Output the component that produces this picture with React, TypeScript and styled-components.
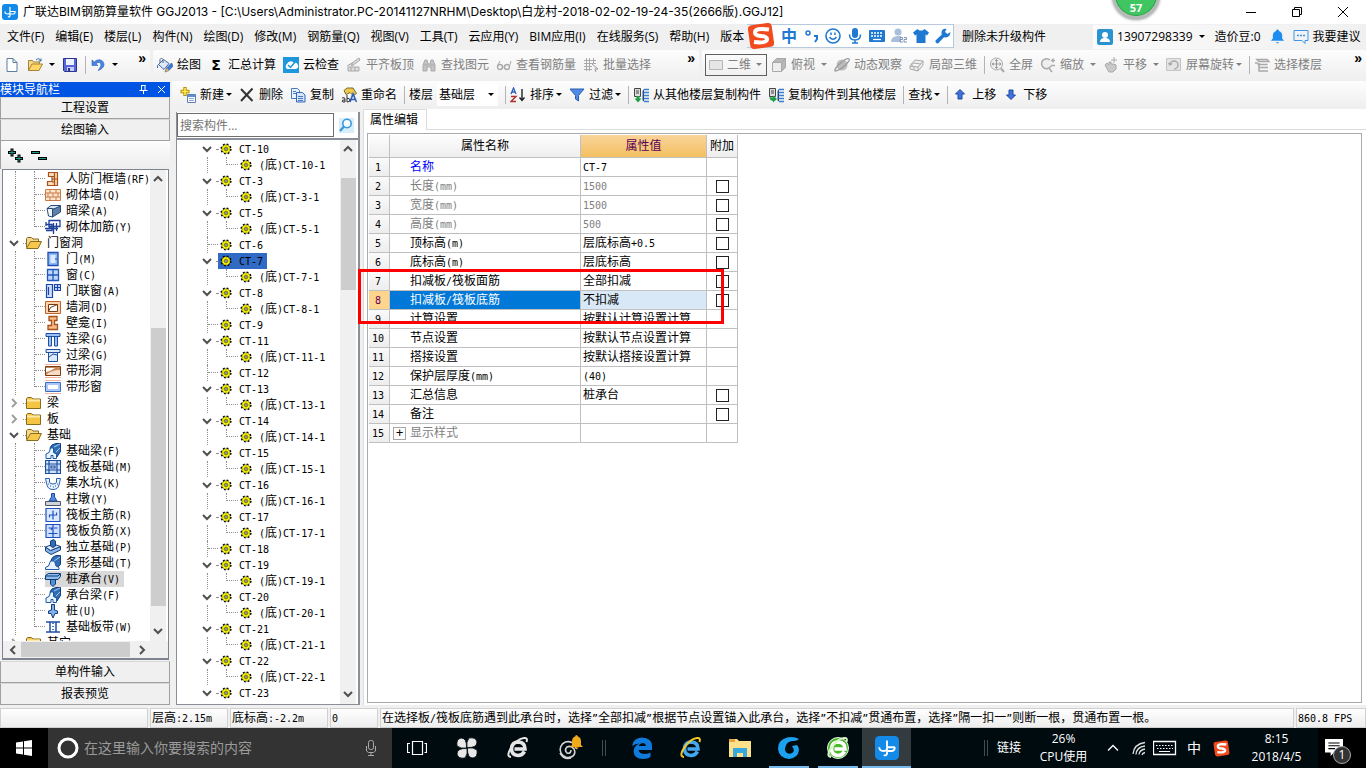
import React from 'react';
import styled, { createGlobalStyle, css } from 'styled-components';

const UI = `'Open Sans', 'Noto Sans CJK SC', sans-serif`;
const SONG = `'Liberation Sans', 'Noto Sans CJK SC', sans-serif`;

const Global = createGlobalStyle`
  * { box-sizing: border-box; }
  html, body { margin: 0; padding: 0; }
  body { font: 12px/16px ${UI}; color: #000; background: #f0f0f0; overflow: hidden; }
  button, input { font: inherit; color: inherit; margin: 0; }
  button { padding: 0; border: 0; background: none; text-align: left; white-space: nowrap; }
  a { color: inherit; text-decoration: none; }
  svg { display: block; flex: none; }
  ul { list-style: none; margin: 0; padding: 0; }
`;

/* ---------- text set with half-width Latin glyphs ---------- */
const Latin = styled.span`
  font-family: 'DejaVu Sans Mono', monospace;
  font-size: 10px;
`;
const Song = ({ children }: { children: string }) => (
  <>
    {children.split(/([\x20-\x7e”]+)/).map((part, i) =>
      i % 2 ? <Latin key={i}>{part}</Latin> : part,
    )}
  </>
);

/* ---------- icons ---------- */
const Svg = ({ size = 16, box = 16, children }: { size?: number; box?: number; children: React.ReactNode }) => (
  <svg width={size} height={size} viewBox={`0 0 ${box} ${box}`} fill="none" aria-hidden="true">
    {children}
  </svg>
);

const G = '#a9a9a9';
const L = '#dcdcdc';
const icons: Record<string, React.ReactNode> = {
  page: <path d="M3 1.5h6l4 4v9H3z M9 1.5v4h4" fill="#fff" stroke="#5d7da3" />,
  open: (
    <>
      <path d="M1.5 13.500V3.500h4l1 1.500h6v2" fill="#f5d98b" stroke="#a8822f" />
      <path d="M1.500 13.500 5 7h10.500L12 13.500z" fill="#ffd766" stroke="#a8822f" />
      <path d="M9 3q3-3 5 1m0 0V1.500M14 4h-2.500" stroke="#3a6ea5" />
    </>
  ),
  save: (
    <>
      <path d="M1.500 1.500h13v13h-12l-1-1z" fill="#5a67d8" stroke="#2c338c" />
      <path d="M4 2h8v6H4z" fill="#eef1ff" />
      <path d="M5 10h7v4H5z" fill="#c8cdf5" />
      <path d="M6 11h2v3H6z" fill="#2c338c" />
    </>
  ),
  undo: (
    <path d="M2 3v5.500h6L6 6.700C9 4 12 6 10.500 9.500 10 11 9 12 8 13.500c5-1.500 7-5 5.500-8C12 2 7 2 4.300 5z" fill="#4a86e0" stroke="#2a5cb8" strokeWidth=".6" />
  ),
  paint: (
    <>
      <path d="m1.500 7.500 5-5 5.500 4-5 6z" fill="#dfe8f7" stroke="#44669c" />
      <path d="M3 6V2.500q1.500-3 3 0V6M2 7q-2 1-1.500 4" stroke="#44669c" />
      <path d="m14.500 6-5 5-1.500 4 4-1.500L16 9z" fill="#3f7ad6" stroke="#1f4c9c" strokeWidth=".6" />
      <path d="m10 11-2 4 4-1.500z" fill="#f0b24a" />
    </>
  ),
  cloud: (
    <>
      <path d="M0 0h16v16H0z" fill="#1f97dc" />
      <path d="M4 12a3 3 0 0 1 0-5 4 4 0 0 1 7-1 3 3 0 0 1 2 6z" fill="#fff" />
      <path d="m5 8 2.500 2.500L12 5" stroke="#1f97dc" strokeWidth="1.500" />
    </>
  ),
  align: <path d="m1 9 5-3v3l8-6-1-2-7 5v3M2 10v4h11v-4zM5 10v4M9 10v4" fill={L} stroke={G} />,
  binoc: <path d="M2 14V8l2-5h2l1 4h2l1-4h2l2 5v6h-4v-4H6v4zM3 8h4M9 8h4" fill="#c4c4c4" stroke={G} />,
  glasses: (
    <>
      <circle cx="4" cy="10" r="2.500" stroke={G} strokeWidth="1.400" />
      <circle cx="11" cy="10" r="2.500" stroke={G} strokeWidth="1.400" />
      <path d="M6.500 10h2M1.500 9 4 4M13.500 9 15 4" stroke={G} />
    </>
  ),
  batch: (
    <>
      <path d="M1 3.500h12M1 6.500h12M1 9.500h8M1 12.500h8M3.500 1v13M6.500 1v13M10.500 1v6" stroke={G} />
      <path d="m9 7 6 5h-3l1 3" fill="#eee" stroke="#999" />
    </>
  ),
  rect2d: <path d="M1.500 3.500h13v9h-13z" fill="#e6e6e6" stroke="#b5b5b5" />,
  cube: (
    <>
      <path d="m1.500 5.500 4-4h9v9l-4 4" fill="#b8b8b8" stroke={G} />
      <path d="M1.500 5.500h9v9h-9z" fill="#eee" stroke={G} />
      <path d="m10.500 5.500 4-4" stroke={G} />
    </>
  ),
  orbit: (
    <>
      <circle cx="8" cy="8" r="5.500" fill="#bcbcbc" />
      <path d="M1 14C-1 12 12 0 15 2c2 2-9 12-14 12" stroke="#9c9c9c" strokeWidth="1.300" />
    </>
  ),
  local3d: <path d="m1 9 5-6 8 1v4l-5 6-8-2zM1 9l8 1 5-6M9 10v4M4 6l8 1M5 9v4M3 6v4" fill="#eee" stroke={G} />,
  full: (
    <>
      <circle cx="7.500" cy="7" r="6" stroke={G} fill="#f1f1f1" />
      <path d="M7.500 2.500v9M3 7h9M6 4l1.500-1.500L9 4M6 10l1.500 1.500L9 10M4.500 5.500 3 7l1.500 1.500M10.500 5.500 12 7l-1.500 1.500" stroke="#999" />
      <path d="m12 11.500 3 3.500" stroke={G} strokeWidth="2" />
    </>
  ),
  zoom: (
    <>
      <path d="M10 3a5 5 0 1 0 1 6" fill="#eee" stroke={G} strokeWidth="1.500" />
      <path d="m9 11 3 4M11 3.500h4M13 1.500v4M11 8.500h4" stroke={G} strokeWidth="1.500" />
    </>
  ),
  pan: <path d="M2 8l2-2 2 2V5h2v2h2l3 1v4l-3 3H6zM11 0v6M8 3h6" fill="#c9c9c9" stroke={G} />,
  rotate: (
    <>
      <path d="M.500 1.500h14v12H.500z" fill="#e4e4e4" stroke="#c4c4c4" />
      <path d="M4 8a4 4 0 1 1 4 4M4 8 2.500 6M4 8l2-1.500" stroke={G} strokeWidth="1.500" />
    </>
  ),
  floors: <path d="M3 2.500h10l2 2H5zM1 6h3M3.500 7.500h10M5 6v8h9M5 10.500h9" stroke={G} strokeWidth="1.500" />,
  create: (
    <>
      <path d="M5 0v9M.500 4.500h9" stroke="#b89300" strokeWidth="3.400" />
      <path d="M5 1v7M1.500 4.500h7" stroke="#ffe85c" strokeWidth="1.600" />
      <path d="M7.500 7.500h8v8h-8z" fill="#fff" stroke="#5b7fb5" />
      <path d="M8 8h7v2H8z" fill="#5b8fd8" />
      <path d="M9 11.500h5M9 13.500h5" stroke="#8aa8d0" />
    </>
  ),
  del: <path d="m2 2 11.500 12M13.500 1.500 2 14" stroke="#333" strokeWidth="2" />,
  copy: (
    <>
      <path d="M1.500 1.500h6l2 2v8h-8z" fill="#e8f0fd" stroke="#4a78c0" />
      <path d="M6.500 5.500h6l2.500 2.500v7H6.500z" fill="#d5e4fb" stroke="#3567b8" />
      <path d="M3 4.500h3M3 6.500h3M8 9.500h5M8 11.500h5M8 13.500h5" stroke="#4a78c0" />
    </>
  ),
  rename: (
    <>
      <path d="M3 3.500 6 1h6l3.500 5.500-3.500 2-3-3-4 2z" fill="#ecc94b" stroke="#7a6a2a" />
      <path d="m9 15 3-8 3.500 8M10.500 12.500h4" stroke="#2b5fb8" strokeWidth="1.600" />
      <path d="M1 11q3-1 3 1v3q-3 .5-3-1 0-1.200 3-1M6 8v7q3 0 3-2t-3-1.500" stroke="#333" />
    </>
  ),
  sort: (
    <>
      <path d="m1 7 2.500-6L6 7M2 5h3" stroke="#2c5fb5" strokeWidth="1.300" />
      <path d="M1 9.500h5l-5 5h5" stroke="#b03030" strokeWidth="1.400" />
      <path d="M12 2v11M9.500 10.500 12 13.500l2.500-3" stroke="#222" strokeWidth="1.400" />
    </>
  ),
  filter: <path d="M1 2h14L9.500 8.500V14l-3-2V8.500z" fill="#4f8be8" stroke="#2a5cb0" />,
  fromFloor: (
    <>
      <path d="M1.500 1.500h6v8h-6z" fill="#ddd" stroke="#444" />
      <path d="M3 4h3M3 6h3" stroke="#444" />
      <path d="m1.500 11.500 3.500 4 3.500-4h-2V9h-3v2.500z" fill="#1f9d45" />
      <path d="M9.500 4 11 2v12.500l-1.500-1z" fill="#244f8a" />
      <path d="M11 2.500h5M11 5.500h5M11 8.500h5M11 11.500h5M11 14.500h5" stroke="#3b7fd0" strokeWidth="1.500" />
    </>
  ),
  toFloor: (
    <>
      <path d="M1.500 1.500h6v8h-6z" fill="#ddd" stroke="#444" />
      <path d="M3 4h3M3 6h3" stroke="#444" />
      <path d="m9 12-4-3.500v2q-3 0-3.500-1 0 4 3.500 4.500v1.500z" fill="#1f9d45" />
      <path d="M9.500 4 11 2v12.500l-1.500-1z" fill="#244f8a" />
      <path d="M11 2.500h5M11 5.500h5M11 8.500h5M11 11.500h5M11 14.500h5" stroke="#3b7fd0" strokeWidth="1.500" />
    </>
  ),
  up: <path d="M8 2.500 12.500 7H10v5H6V7H3.500z" fill="#3f74dc" stroke="#1d46a0" />,
  down: <path d="M8 12.500 3.500 8H6V3h4v5h2.500z" fill="#3f74dc" stroke="#1d46a0" />,
  search: (
    <>
      <path d="M1 1h15v15H1z" fill="#d8edfc" />
      <circle cx="9" cy="6.500" r="4.200" stroke="#3a97dc" strokeWidth="1.600" fill="#f6fbff" />
      <path d="m6 9.500-4 4.500" stroke="#3a97dc" strokeWidth="2.400" />
    </>
  ),
  gear: (
    <>
      <circle cx="8" cy="8" r="4.700" stroke="#000" strokeWidth="1.800" strokeDasharray="1.850 1.840" />
      <circle cx="8" cy="8" r="4.200" fill="#ff0" stroke="#000" strokeWidth=".4" />
      <path d="M8 4.500v7M4.500 8h7M5.700 5.700l4.600 4.600M10.300 5.700l-4.600 4.600" stroke="#6b6600" strokeWidth=".5" />
      <circle cx="8" cy="8" r="1.300" fill="#fff" stroke="#222" strokeWidth=".8" />
    </>
  ),
  folder: (
    <>
      <path d="M.500 13.500v-10l1-1h4l1.500 1.500h7.500v9.500z" fill="#f4c542" stroke="#8a6a1c" />
      <path d="M1 5.500h13" stroke="#ffe9a6" strokeWidth="2" />
    </>
  ),
  folderOpen: (
    <>
      <path d="M.500 12.500v-9l1-1h4l1.500 1.500h5.500v3" fill="#f3d98d" stroke="#8a6a1c" />
      <path d="m.500 13.500 4-7h11l-3.500 7z" fill="#f6c94c" stroke="#8a6a1c" />
    </>
  ),
  frameWall: <path d="M3.500 1.500h9v13h-10v-4H7v-5H3.500zM9.500 2v12M7 8h5.500M7 5.500h3M7 11h3" fill="#fbd9b8" stroke="#a4501a" strokeWidth="1.200" />,
  brick: <path d="M.500 2.500h15v11H.500zM.500 6h15M.500 10h15M5 2.500V6M11 2.500V6M8 6v4M3 6v4M13 6v4M5 10v3.500M11 10v3.500" fill="#fde6d0" stroke="#c97a45" />,
  beam: (
    <>
      <path d="m2 5.500 4-3h9.500L11 6.500z" fill="#dbe8f7" stroke="#274a74" />
      <path d="M7.500 6.500 15.500 3v6l-8 5z" fill="#5f7fa6" stroke="#274a74" />
      <path d="M2 5.500h5.500V14l-4-1z" fill="#eef4fb" stroke="#274a74" />
    </>
  ),
  rebarWall: <path d="M4 1.500h11v6H4zM0 9.500h13M1 5.500h6v6H1M8.500 4v11M11.500 4v8M4 8l3 2M1 3v4" stroke="#1d3f9a" strokeWidth="1.300" />,
  door: (
    <>
      <path d="M3 1.500h10v13H3z" fill="#8cb8f5" stroke="#1d4db0" strokeWidth="1.300" />
      <path d="M5.500 4h5v8h-5z" fill="#dcebff" />
      <path d="M10 8h2" stroke="#1d4db0" />
    </>
  ),
  window: <path d="M2.500 2.500h11v11h-11zM8 2.500v11M2.500 8h11" fill="#bcd8ff" stroke="#2456bc" strokeWidth="1.300" />,
  doorWin: <path d="M1.500 1.500h6v13h-6zM9.500 1.500h6v6h-6zM12.500 1.500v6M9.500 4.500h6M3.500 4v8" fill="#cfe0ff" stroke="#1d44a8" strokeWidth="1.200" />,
  hole: (
    <>
      <path d="M.500 2.500h15v12H.500z" fill="#fbd3ae" stroke="#c1622a" />
      <path d="M3.500 5.500h9v7h-9z" fill="#fff" stroke="#7a3b14" />
      <path d="m3.500 12.500 2-4 7-3" stroke="#7a3b14" />
    </>
  ),
  niche: <path d="M4 1.500h8v4H9.500v4h3v5H3v-4h3.500v-5H4z" fill="#f5b98a" stroke="#a4501a" strokeWidth="1.300" />,
  linkBeam: <path d="M1 2.500h14v3H1zM3.500 5.500h3V15h-3zM9.500 5.500h3V15h-3z" fill="#9cc0f5" stroke="#1c4d9e" />,
  lintel: <path d="M1 2.500h14v3H1zM3.500 5.500h9v9h-9zM4 10l4-3 4 1" fill="#dce9fb" stroke="#1c4d9e" />,
  stripHole: (
    <>
      <path d="M0 1.500h16M0 14.500h16" stroke="#f4b0a0" />
      <path d="M.500 3.500h15v9H.500z" fill="#c98a5a" stroke="#7a3b14" />
      <path d="M1 9q5-1 9-4H1z" fill="#fff" />
      <path d="M1 12q5-5 14-5v5z" fill="#f6dcc6" />
    </>
  ),
  stripWin: (
    <>
      <path d="M0 1.500h16M0 14.500h16" stroke="#f4b0a0" />
      <path d="M.500 3.500h15v9H.500z" fill="#a9c8f7" stroke="#3a6cc4" />
      <path d="M3 6h10v4H3z" fill="#fff" />
    </>
  ),
  found: (
    <>
      <path d="M5 5q1-4 6-4.500h4.500v8L12 14H9z" fill="#2f6db5" stroke="#123f7c" />
      <path d="m9 4 6-3M11 9l4-4" stroke="#a9cdf2" />
      <path d="M1 15.500V11l3-1.500L5.500 5h3v4.500l3 1.500v4.500H8v-3H6v3z" fill="#eaf3fd" stroke="#1c5aa5" />
    </>
  ),
  raft: <path d="M.500 1.500h15v13H.500zM4 1.500v13M12 1.500v13M.500 5h15M.500 11h15M6 7h4v2H6z" fill="#cfe2fb" stroke="#1c4d9e" strokeWidth="1.200" />,
  pit: (
    <>
      <path d="M.500 3.500h4V7q0 2 3.500 2t3.500-2V3.500h4L14 10q-1 4.500-6 4.500T2 10z" fill="#e8f1fd" stroke="#2b62b0" />
      <path d="M3 9h1M5 11h1M8 12h1M10 11h1M12 9h1" stroke="#2b62b0" />
    </>
  ),
  pier: (
    <>
      <path d="M.500 10.500h15v4H.500z" fill="#d0d4da" stroke="#4c5563" />
      <path d="M6.500 2.500h3V6l2.500 4H4l2.500-4z" fill="#4f8be0" stroke="#1c4d9e" />
    </>
  ),
  rebarMain: <path d="M1 1.500h14v13H1zM8 3.500v9M4.500 10.500V8h7V5.500" fill="#dbe9ff" stroke="#1d4fc0" strokeWidth="1.200" />,
  rebarNeg: <path d="M1 1.500h14v13H1zM8 1.500v13M3.500 5h3.500l-1 2M9 5h3.500M3.500 10.500h9" fill="#cfe0ff" stroke="#1d4fc0" strokeWidth="1.200" />,
  isolated: (
    <>
      <path d="m.500 8 5 3.500 10-4v3.500L6 15.500.500 12z" fill="#8ab4e8" stroke="#123f7c" />
      <path d="m.500 8 8-3 7 2.500-10 4z" fill="#dceafa" stroke="#123f7c" />
      <path d="M5.500 7V2l3-1.500 2 1.500v5l-2.500 1.500z" fill="#2f6db5" stroke="#123f7c" />
    </>
  ),
  strip: (
    <>
      <path d="M6 6q1-5 6-5.500h3.500v9L12 13z" fill="#2f6db5" stroke="#123f7c" />
      <path d="m9 6 6-4" stroke="#a9cdf2" />
      <path d="M.500 14.500v-2l3-1.500L5.500 6h4l1.500 5 3 1.500v2z" fill="#eaf3fd" stroke="#1c5aa5" />
    </>
  ),
  cap: (
    <>
      <path d="M5.500 8v5L8 15.500l2.500-2.500V8z" fill="#4f8fd8" stroke="#0f3b75" />
      <path d="m.500 4.500 3-2h12v3l-2.500 3H.500z" fill="#8fbdee" stroke="#0f3b75" />
      <path d="M1 5h12l2-2" stroke="#0f3b75" />
    </>
  ),
  pile: <path d="M6.500 1.500h3V7l3 1v2.500H10L8 15l-2-4.500H3.500V8l3-1z" fill="#7fb0ea" stroke="#0f3b75" />,
  band: <path d="M1 3h14M1 13h14M5 3v10M11 3v10M8 4v1M8 7v1M8 10v1" stroke="#1d4fa8" strokeWidth="1.500" />,
  user: (
    <>
      <rect width="16" height="16" rx="2" fill="#2b93cf" />
      <circle cx="8" cy="6" r="3" fill="#fff" />
      <path d="M3 13q0-4 5-4t5 4z" fill="#fff" />
    </>
  ),
  bell: <path d="M8 .500q1.500 0 1.500 1.500Q13 3 13 7v3l2 2.500H1L3 10V7q0-4 3.500-5Q6.500.500 8 .500M6 14h4l-2 1.500z" fill="#1e8df0" />,
  chat: (
    <>
      <path d="M1 1.500h14v10h-3v3l-3-3H1z" stroke="#3d95e8" />
      <path d="M4 6.500h2M7 6.500h2M10 6.500h2" stroke="#3d95e8" strokeWidth="1.500" />
    </>
  ),
  app: (
    <>
      <rect width="16" height="16" rx="3" fill="#1389e8" />
      <path d="M8 3v9.500M2.800 7.500Q3 10 5.500 10T8 8.500M8 7.500h5.300M8 10h3.500q1.500 0 1.800-2.500M5.800 12.800Q8 13.500 8 11" stroke="#fff" strokeWidth="1.200" />
    </>
  ),
  smile: (
    <>
      <circle cx="8" cy="8" r="7" stroke="#1f78d1" strokeWidth="1.600" />
      <path d="M4.500 9q3.500 4.500 7 0M6 4.500v2.500M10 4.500v2.500" stroke="#1f78d1" strokeWidth="1.500" />
    </>
  ),
  mic: (
    <>
      <rect x="5" y="0" width="6" height="10" rx="3" fill="#1f78d1" />
      <path d="M2.500 6.500q0 5.500 5.500 5.500t5.500-5.500M8 12v3.500M5 15h6" stroke="#1f78d1" strokeWidth="1.500" />
    </>
  ),
  keys: (
    <>
      <rect x="0" y="2" width="16" height="12" rx="1" fill="#1f78d1" />
      <path d="M2 5h12M2 8h12" stroke="#fff" strokeWidth="1.300" strokeDasharray="2 1" />
      <path d="M4 11.500h8" stroke="#fff" strokeWidth="1.300" />
    </>
  ),
  person: (
    <>
      <circle cx="7" cy="4" r="3.500" fill="#a9bfdb" />
      <path d="M0 14q0-6 7-6h3v6z" fill="#a9bfdb" />
      <path d="M9 9.500h2.500v2H9v2.500h3M13 9.500h2.500v2H13v2.500h3" stroke="#7e93b3" />
    </>
  ),
  shirt: <path d="m4.500 1 2 1.500h3l2-1.500L16 4.500l-2 3-1.500-1V15h-9V6.500L2 7.500l-2-3z" fill="#1f78d1" />,
  wrench: <path d="M15.500 4 12.500 6 10 4l1.500-3Q7 0 6.500 4.500q0 1 .300 2L.500 12.500q-.5 2.500 2.500 3L9 9.300q6 1 6.500-5.300" fill="#1f78d1" />,
};
const Icon = ({ name, size = 16 }: { name: string; size?: number }) => <Svg size={size}>{icons[name]}</Svg>;

const Sogou = ({ size }: { size: number }) => (
  <Svg size={size} box={28}>
    <rect x="2" y="2" width="24" height="24" rx="4" fill="#f04a1d" transform="rotate(-8 14 14)" />
    <path d="M22 7.500Q8 5.500 8 10.500q0 3 6 3.500 6.500.5 6 3.500-.5 4-13 2.500" stroke="#fff" strokeWidth="4" />
  </Svg>
);

const Chevron = ({ dir, color = '#505050' }: { dir: 'up' | 'down' | 'left' | 'right'; color?: string }) => {
  const d = {
    up: 'm2 7 4-4 4 4',
    down: 'm2 4 4 4 4-4',
    left: 'M8 2 4 6l4 4',
    right: 'm4 2 4 4-4 4',
  }[dir];
  return (
    <Svg size={12} box={12}>
      <path d={d} stroke={color} strokeWidth="2" />
    </Svg>
  );
};

/* ---------- window frame ---------- */
const Window = styled.div`
  display: flex;
  flex-direction: column;
  height: 100vh;
  overflow: hidden;
`;
const TitleBar = styled.header`
  position: relative;
  display: flex;
  align-items: center;
  height: 24px;
  flex: none;
  padding-left: 2px;
  gap: 5px;
  background: #fff;
`;
const Title = styled.h1`
  flex: 1;
  margin: 0;
  font: 12px/16px Inter, 'Noto Sans CJK SC', sans-serif;
  white-space: nowrap;
`;
const WinButton = styled.button`
  display: flex;
  align-items: center;
  justify-content: center;
  width: 46px;
  height: 20px;
`;
const WinButtons = styled.div`
  display: flex;
`;
const Ball = styled.div`
  position: absolute;
  right: 206px;
  top: -29px;
  width: 48px;
  height: 48px;
  padding-top: 28px;
  border: 3px solid #b5bcb7;
  border-radius: 50%;
  background: #3fc660;
  box-shadow: inset 0 0 0 1px #2a9c45, 0 1px 3px #999;
  color: #fff;
  font: bold 11px/12px ${UI};
  text-align: center;
  z-index: 2;
`;

const MenuBar = styled.nav`
  position: relative;
  display: flex;
  align-items: center;
  height: 25px;
  flex: none;
  padding-left: 7px;
`;
const Menus = styled.div`
  display: flex;
  gap: 11px;
  width: 955px;
  flex: none;
`;
const Account = styled.div`
  display: flex;
  align-items: center;
  flex: 1;
  height: 24px;
  margin-left: 47px;
  padding: 0 6px 0 4px;
  gap: 4px;
  background: linear-gradient(90deg, #fafafa, #f0f0f0);
  white-space: nowrap;
`;
const Beans = styled.span`
  margin: 0 5px 0 6px;
`;
const Advice = styled.a`
  display: flex;
  align-items: center;
  gap: 4px;
  margin-left: 4px;
`;
const Ime = styled.div`
  position: absolute;
  left: 747px;
  top: 0;
  display: flex;
  align-items: center;
  gap: 6px;
  width: 207px;
  height: 24px;
  background: linear-gradient(90deg, transparent 12px, #fff 12px);
  border: solid #b7c9dc;
  border-width: 1px 1px 1px 0;
  color: #1f78d1;
  font: bold 16px/20px ${UI};
  white-space: nowrap;
`;

/* ---------- toolbars ---------- */
const Bar = styled.div<{ $h?: number }>`
  display: flex;
  height: ${(p) => p.$h ?? 31}px;
  flex: none;
  gap: 3px;
  padding: 1px 0;
`;
const Segment = styled.div<{ $w?: number; $pad?: number }>`
  display: flex;
  align-items: center;
  gap: 7px;
  ${(p) => (p.$w ? `width: ${p.$w}px;` : 'flex: 1; min-width: 0;')}
  padding: 0 4px 0 ${(p) => p.$pad ?? 4}px;
  background: linear-gradient(#fdfdfd, #efefef);
  border-radius: 2px;
`;
const ToolButton = styled.button<{ $off?: boolean }>`
  display: flex;
  align-items: center;
  gap: 4px;
  flex: none;
  color: ${(p) => (p.$off ? '#808080' : '#000')};
`;
const Sep = styled.i`
  width: 1px;
  height: 18px;
  flex: none;
  margin-right: -3px;
  background: #b4b4b4;
`;
const Caret = styled.i<{ $wide?: boolean }>`
  flex: none;
  margin-left: ${(p) => (p.$wide ? 2 : -2)}px;
  border: 3px solid transparent;
  border-top-color: currentColor;
  border-bottom: 0;
`;
const More = styled.button`
  align-self: flex-start;
  margin: 1px 0 0 auto;
  font: bold 14px/14px ${SONG};
`;
const ViewMode = styled.button`
  display: flex;
  align-items: center;
  gap: 3px;
  width: 62px;
  height: 22px;
  flex: none;
  margin: 0 -3px 0 -1px;
  padding: 0 4px 0 2px;
  border: 1px solid #606060;
  color: #808080;
`;
const FloorPick = styled.button`
  display: flex;
  align-items: center;
  justify-content: space-between;
  width: 61px;
  height: 22px;
  flex: none;
  margin-left: -3px;
  padding: 0 4px 0 2px;
  background: #fff;
`;
const Sigma = styled.span`
  width: 16px;
  font: bold 14px/16px 'DejaVu Sans', sans-serif;
  text-align: center;
`;

type Tool = { icon?: string; label: string; caret?: boolean; sep?: boolean };
const Tools = ({ list, off, wide }: { list: Tool[]; off?: boolean; wide?: boolean }) => (
  <>
    {list.map((t) => (
      <React.Fragment key={t.label}>
        <ToolButton $off={off}>
          {t.icon === 'sigma' ? <Sigma>Σ</Sigma> : t.icon && <Icon name={t.icon} />}
          {t.label}
          {t.caret && <Caret $wide={wide} />}
        </ToolButton>
        {t.sep && <Sep />}
      </React.Fragment>
    ))}
  </>
);

/* ---------- left navigation ---------- */
const Work = styled.main`
  display: flex;
  flex: 1;
  min-height: 0;
`;
const Nav = styled.aside`
  display: flex;
  flex-direction: column;
  width: 170px;
  flex: none;
  margin-right: 2px;
  padding-top: 2px;
  font-family: ${SONG};
`;
const NavTitle = styled.div`
  display: flex;
  align-items: center;
  height: 15px;
  flex: none;
  gap: 9px;
  padding-right: 4px;
  background: #0054e3;
  color: #fff;
  line-height: 14px;
  span { flex: 1; }
`;
const NavButton = styled.button`
  height: 22px;
  flex: none;
  border: 1px solid #a0a0a0;
  border-top-color: #d8d8d8;
  background: #f0f0f0;
  text-align: center;
`;
const NavTools = styled.div`
  display: flex;
  align-items: center;
  gap: 5px;
  height: 28px;
  flex: none;
  padding: 2px 6px 0;
  border-left: 1px solid #a0a0a0;
  background: linear-gradient(#fdfdfd, #ededed);
`;
const TreeFrame = styled.div`
  display: flex;
  flex-direction: column;
  flex: 1;
  min-height: 0;
  margin: 0 1px 1px 2px;
  border: 1px solid #7f8590;
  border-width: 1px 1px 2px;
  background: #fff;
`;
const TreeBody = styled.div`
  display: flex;
  flex: 1;
  min-height: 0;
`;
const Tree = styled.ul<{ $indent?: number }>`
  flex: 1;
  min-width: 0;
  overflow: hidden;
  padding: 1px 0 0 ${(p) => p.$indent ?? 0}px;
  font-family: ${SONG};
`;
const VScroll = styled.div`
  display: flex;
  flex-direction: column;
  align-items: center;
  width: 16px;
  flex: none;
  margin-right: 2px;
  padding: 4px 0;
  background: #f0f0f0;
`;
const HScroll = styled.div`
  display: flex;
  align-items: center;
  height: 17px;
  flex: none;
  padding: 0 20px 0 4px;
  background: #f0f0f0;
`;
const Spacer = styled.i<{ $grow: number }>`
  flex: ${(p) => p.$grow} 1 0;
`;
const Thumb = styled.i<{ $grow: number; $across?: boolean }>`
  flex: ${(p) => p.$grow} 1 0;
  ${(p) => (p.$across ? 'height: 15px; margin: 0 2px;' : 'width: 15px;')}
  background: #cdcdcd;
`;
const Row = styled.li`
  display: flex;
  align-items: center;
  height: 16px;
  white-space: nowrap;
`;
const Fold = styled.span`
  display: flex;
  justify-content: center;
  width: 20px;
  flex: none;
  padding-left: 2px;
`;
const Dots = styled.i<{ $w: number }>`
  width: ${(p) => p.$w}px;
  flex: none;
  border-top: 1px dotted #909090;
`;
const Guide = styled.i<{ $at: number; $w: number; $none?: boolean }>`
  align-self: flex-start;
  width: ${(p) => p.$w - p.$at}px;
  height: 16px;
  flex: none;
  margin-left: ${(p) => p.$at}px;
  ${(p) => !p.$none && 'border-left: 1px dotted #909090;'}
`;
const Branch = styled.i<{ $half?: boolean; $w: number }>`
  position: relative;
  align-self: flex-start;
  width: ${(p) => p.$w}px;
  height: ${(p) => (p.$half ? 8 : 16)}px;
  flex: none;
  border-left: 1px dotted #909090;
  &::after {
    content: '';
    position: absolute;
    left: 0;
    right: 0;
    top: 7px;
    border-top: 1px dotted #909090;
  }
`;
const Node = styled.button<{ $on?: 'gray' | 'blue' }>`
  display: flex;
  align-items: center;
  gap: 5px;
  height: 16px;
  padding-right: 4px;
  ${(p) => p.$on === 'gray' && css`background: #d9d9d9;`}
  ${(p) => p.$on === 'blue' && css`background: #316ac5;`}
`;

type Item = [icon: string, label: string];
const groups: { name: string; state: 'open' | 'closed' | 'none'; items: Item[] }[] = [
  { name: '', state: 'none', items: [['frameWall', '人防门框墙(RF)'], ['brick', '砌体墙(Q)'], ['beam', '暗梁(A)'], ['rebarWall', '砌体加筋(Y)']] },
  {
    name: '门窗洞', state: 'open',
    items: [['door', '门(M)'], ['window', '窗(C)'], ['doorWin', '门联窗(A)'], ['hole', '墙洞(D)'], ['niche', '壁龛(I)'], ['linkBeam', '连梁(G)'], ['lintel', '过梁(G)'], ['stripHole', '带形洞'], ['stripWin', '带形窗']],
  },
  { name: '梁', state: 'closed', items: [] },
  { name: '板', state: 'closed', items: [] },
  {
    name: '基础', state: 'open',
    items: [['found', '基础梁(F)'], ['raft', '筏板基础(M)'], ['pit', '集水坑(K)'], ['pier', '柱墩(Y)'], ['rebarMain', '筏板主筋(R)'], ['rebarNeg', '筏板负筋(X)'], ['isolated', '独立基础(P)'], ['strip', '条形基础(T)'], ['cap', '桩承台(V)'], ['found', '承台梁(F)'], ['pile', '桩(U)'], ['band', '基础板带(W)']],
  },
  { name: '其它', state: 'closed', items: [] },
];

const NavPanel = () => (
  <Nav>
    <NavTitle>
      <span>模块导航栏</span>
      <Svg size={9} box={9}><path d="M2.500 0v5M6 0v5M2 .500h4.500M.500 5.500h8M4.500 5.500V9" stroke="#fff" /></Svg>
      <Svg size={9} box={9}><path d="m1 1 7 7M8 1 1 8" stroke="#fff" /></Svg>
    </NavTitle>
    <NavButton>工程设置</NavButton>
    <NavButton>绘图输入</NavButton>
    <NavTools>
      <Svg size={18} box={18}>
        <path d="M5 1.500v8M1 5.500h8M12 7.500v8M8 11.500h8" stroke="#000" strokeWidth="3" />
        <path d="M5 2.500v6M2 5.500h6M12 8.500v6M9 11.500h6" stroke="#1c9a8c" strokeWidth="1" />
      </Svg>
      <Svg size={18} box={18}>
        <path d="M1 5.500h9M8 11.500h9" stroke="#000" strokeWidth="3" />
        <path d="M2 5.500h7M9 11.500h7" stroke="#1c9a8c" strokeWidth="1" />
      </Svg>
    </NavTools>
    <TreeFrame>
      <TreeBody>
        <Tree>
          {groups.map((g) => (
            <React.Fragment key={g.name}>
              {g.state !== 'none' && (
                <Row>
                  <Fold>{g.state === 'open' ? <Chevron dir="down" /> : <Chevron dir="right" color="#a0a0a0" />}</Fold>
                  <Dots $w={3} />
                  <Node>
                    <Icon name={g.state === 'open' ? 'folderOpen' : 'folder'} />
                    <span>{g.name}</span>
                  </Node>
                </Row>
              )}
              {g.items.map(([icon, label], i) => (
                <Row key={label}>
                  <Guide $at={12} $w={31} />
                  <Branch $w={11} $half={i === g.items.length - 1} />
                  <Node $on={label === '桩承台(V)' ? 'gray' : undefined}>
                    <Icon name={icon} />
                    <span><Song>{label}</Song></span>
                  </Node>
                </Row>
              ))}
            </React.Fragment>
          ))}
        </Tree>
        <VScroll>
          <Chevron dir="up" />
          <Spacer $grow={140} />
          <Thumb $grow={275} />
          <Spacer $grow={19} />
          <Chevron dir="down" />
        </VScroll>
      </TreeBody>
      <HScroll>
        <Chevron dir="left" />
        <Thumb $grow={110} $across />
        <Spacer $grow={4} />
        <Chevron dir="right" />
      </HScroll>
    </TreeFrame>
    <NavButton>单构件输入</NavButton>
    <NavButton>报表预览</NavButton>
  </Nav>
);

/* ---------- member list ---------- */
const Content = styled.div`
  display: flex;
  flex-direction: column;
  flex: 1;
  min-width: 0;
`;
const Panels = styled.div`
  display: flex;
  flex: 1;
  min-height: 0;
  gap: 3px;
  padding-left: 4px;
`;
const Members = styled.section`
  display: flex;
  flex-direction: column;
  width: 184px;
  flex: none;
  margin-top: 3px;
  border: solid #8a8f99;
  border-width: 0 2px 1px 1px;
  background: #fff;
`;
const SearchRow = styled.form`
  display: flex;
  align-items: center;
  gap: 4px;
  height: 28px;
  flex: none;
  border-bottom: 2px solid #8a8f99;
`;
const SearchInput = styled.input`
  width: 157px;
  height: 24px;
  padding: 0 2px;
  border: 1px solid #6f6f6f;
  font-size: 12px;
  &::placeholder { color: #757575; opacity: 1; }
`;
type Member = { name: string; child?: boolean; folded?: boolean };
const members: Member[] = [
  { name: 'CT-10', child: true }, { name: 'CT-3', child: true }, { name: 'CT-5', child: true }, { name: 'CT-6' },
  { name: 'CT-7', child: true }, { name: 'CT-8', child: true }, { name: 'CT-9' }, { name: 'CT-11', child: true },
  { name: 'CT-12' }, { name: 'CT-13', child: true }, { name: 'CT-14', child: true }, { name: 'CT-15', child: true },
  { name: 'CT-16', child: true }, { name: 'CT-17', child: true }, { name: 'CT-18' }, { name: 'CT-19', child: true },
  { name: 'CT-20', child: true }, { name: 'CT-21', child: true }, { name: 'CT-22', child: true }, { name: 'CT-23', folded: true },
];

const MemberPanel = () => (
  <Members>
    <SearchRow>
      <SearchInput aria-label="搜索构件" placeholder="搜索构件..." />
      <button type="button" aria-label="搜索"><Icon name="search" /></button>
    </SearchRow>
    <TreeBody>
      <Tree $indent={19}>
        {members.map(({ name, child, folded }) => (
          <React.Fragment key={name}>
            <Row>
              {child || folded ? (
                <><Fold><Chevron dir="down" /></Fold><Dots $w={2} /></>
              ) : (
                <><Guide $at={0} $w={11} $none /><Branch $w={11} /></>
              )}
              <Node $on={name === 'CT-7' ? 'blue' : undefined}>
                <Icon name="gear" />
                <span><Song>{name}</Song></span>
              </Node>
            </Row>
            {child && (
              <Row>
                <Guide $at={11} $w={30} />
                <Branch $w={12} $half />
                <Node>
                  <Icon name="gear" />
                  <span><Song>{`(底)${name}-1`}</Song></span>
                </Node>
              </Row>
            )}
          </React.Fragment>
        ))}
      </Tree>
      <VScroll>
        <Chevron dir="up" />
        <Spacer $grow={22} />
        <Thumb $grow={111} />
        <Spacer $grow={397} />
        <Chevron dir="down" />
      </VScroll>
    </TreeBody>
  </Members>
);

/* ---------- property editor ---------- */
const Editor = styled.section`
  display: flex;
  flex-direction: column;
  flex: 1;
  min-width: 0;
  border-left: 1px solid #dcdcdc;
  font-family: ${SONG};
`;
const TabRow = styled.div`
  display: flex;
  height: 21px;
  flex: none;
  background: #fff;
  &::after {
    content: '';
    flex: 1;
    border-bottom: 1px solid #dcdcdc;
  }
`;
const Tab = styled.button`
  width: 63px;
  padding-left: 6px;
  border: solid #dcdcdc;
  border-width: 1px 1px 0 0;
`;
const Page = styled.div`
  display: flex;
  flex: 1;
  min-height: 0;
  padding: 3px 4px 2px 3px;
  background: #fff;
`;
const Sheet = styled.div`
  position: relative;
  flex: 1;
  padding: 1px;
  border: 1px solid #a8abb0;
`;
const Grid = styled.table`
  width: 369px;
  table-layout: fixed;
  border-collapse: separate;
  border-spacing: 0;
`;
const line = css`
  height: 19px;
  padding: 0;
  border: solid #c0c0c0;
  border-width: 0 1px 1px 0;
  font-weight: normal;
  line-height: 16px;
  white-space: nowrap;
`;
const Head = styled.th<{ $on?: boolean }>`
  ${line}
  height: 23px;
  background: ${(p) => (p.$on ? 'linear-gradient(#f9d49a, #f3bf60)' : 'linear-gradient(#fdfdfd, #eee)')};
  color: ${(p) => (p.$on ? '#5b0055' : '#000')};
`;
const Index = styled.th<{ $on?: boolean }>`
  ${line}
  padding-right: 2px;
  background: ${(p) => (p.$on ? '#ffd58d' : 'linear-gradient(#fafafa, #ededed)')};
  color: ${(p) => (p.$on ? '#5b0055' : '#000')};
`;
const Cell = styled.td<{ $kind: 'name' | 'value' | 'mark'; $on?: boolean; $tone?: string }>`
  ${line}
  ${(p) => p.$kind === 'name' && css`padding-left: 20px;`}
  ${(p) => p.$kind === 'value' && css`padding-left: 2px;`}
  color: ${(p) => p.$tone ?? '#000'};
  ${(p) => p.$on && p.$kind === 'name' && css`background: #0078d7; color: #fff;`}
  ${(p) => p.$on && p.$kind === 'value' && css`background: #d9e8f6;`}
`;
const Check = styled.input`
  display: block;
  width: 13px;
  height: 13px;
  margin: 0 auto;
  appearance: none;
  border: 1px solid #222;
  background: #fff;
`;
const Expand = styled.button`
  display: inline-block;
  width: 13px;
  height: 13px;
  margin: 0 4px 0 -17px;
  border: 1px solid #a8a8a8;
  color: #000;
  font: 12px/11px 'DejaVu Sans Mono', monospace;
  text-align: center;
  vertical-align: middle;
`;
const Highlight = styled.div`
  position: absolute;
  left: -10px;
  top: 135px;
  width: 366px;
  height: 55px;
  border: 3px solid #f00;
  pointer-events: none;
`;
type Prop = [name: string, value: string, check: boolean, tone?: string];
const props: Prop[] = [
  ['名称', 'CT-7', false],
  ['长度(mm)', '1500', true, '#808080'],
  ['宽度(mm)', '1500', true, '#808080'],
  ['高度(mm)', '500', true, '#808080'],
  ['顶标高(m)', '层底标高+0.5', true],
  ['底标高(m)', '层底标高', true],
  ['扣减板/筏板面筋', '全部扣减', true],
  ['扣减板/筏板底筋', '不扣减', true],
  ['计算设置', '按默认计算设置计算', false],
  ['节点设置', '按默认节点设置计算', false],
  ['搭接设置', '按默认搭接设置计算', false],
  ['保护层厚度(mm)', '(40)', false],
  ['汇总信息', '桩承台', true],
  ['备注', '', true],
  ['显示样式', '', false, '#808080'],
];

const PropertyPanel = () => (
  <Editor>
    <TabRow><Tab>属性编辑</Tab></TabRow>
    <Page>
      <Sheet>
        <Grid>
          <colgroup>
            <col width="21" /><col width="191" /><col width="126" /><col width="31" />
          </colgroup>
          <thead>
            <tr><Head /><Head>属性名称</Head><Head $on>属性值</Head><Head>附加</Head></tr>
          </thead>
          <tbody>
            {props.map(([name, value, check, tone], i) => {
              const on = i === 7;
              return (
                <tr key={name}>
                  <Index $on={on}><Song>{String(i + 1)}</Song></Index>
                  <Cell $kind="name" $on={on} $tone={i === 0 ? '#0000ff' : tone}>
                    {i === 14 && <Expand aria-label="展开">+</Expand>}
                    <Song>{name}</Song>
                  </Cell>
                  <Cell $kind="value" $on={on} $tone={i === 0 ? undefined : tone}><Song>{value}</Song></Cell>
                  <Cell $kind="mark">{check && <Check type="checkbox" aria-label={name} />}</Cell>
                </tr>
              );
            })}
          </tbody>
        </Grid>
        <Highlight />
      </Sheet>
    </Page>
  </Editor>
);

/* ---------- status bar ---------- */
const Status = styled.footer`
  display: flex;
  gap: 2px;
  height: 23px;
  flex: none;
  padding-top: 3px;
  font-family: ${SONG};
`;
const StatusCell = styled.div<{ $w?: number }>`
  ${(p) => (p.$w ? `width: ${p.$w}px; flex: none;` : 'flex: 1; min-width: 0;')}
  padding: 1px;
  border: 1px solid #d0d0d0;
  background: linear-gradient(#fff, #ededed);
  white-space: nowrap;
  overflow: hidden;
`;

/* ---------- task bar ---------- */
const Taskbar = styled.footer`
  display: flex;
  align-items: center;
  height: 40px;
  flex: none;
  background: #000b10;
  color: #fff;
`;
const Start = styled.button`
  display: flex;
  align-items: center;
  justify-content: center;
  width: 48px;
  height: 40px;
  background: #000;
`;
const Cortana = styled.label`
  display: flex;
  align-items: center;
  gap: 5px;
  width: 344px;
  height: 40px;
  padding: 0 13px 0 9px;
  background: #333;
`;
const CortanaInput = styled.input`
  flex: 1;
  min-width: 0;
  padding: 0;
  border: 0;
  background: none;
  font: 14px/20px ${UI};
  &::placeholder { color: #9a9a9a; opacity: 1; }
`;
const Task = styled.button<{ $run?: boolean; $on?: boolean; $w?: number }>`
  display: flex;
  align-items: center;
  justify-content: center;
  width: ${(p) => p.$w ?? 49}px;
  height: 40px;
  flex: none;
  background: ${(p) => (p.$on ? '#343b3f' : 'none')};
  ${(p) => p.$run && css`
    &::after {
      content: '';
      align-self: flex-end;
      width: 40px;
      height: 2px;
      margin-left: -32px;
      margin-right: -8px;
      background: #76b9ed;
    }
  `}
  ${(p) => p.$on && css`
    &::after { width: 49px; margin-left: -37px; margin-right: -12px; }
  `}
`;
const Grip = styled.i<{ $after?: number }>`
  width: 4px;
  height: 16px;
  flex: none;
  margin: 0 ${(p) => p.$after ?? 0}px 0 4px;
  border: solid #444c50;
  border-width: 0 1px;
`;
const Tray = styled.div`
  display: flex;
  align-items: center;
  margin-left: auto;
  white-space: nowrap;
`;
const TrayText = styled.div<{ $w: number }>`
  width: ${(p) => p.$w}px;
  line-height: 18px;
  text-align: center;
`;
const TraySlot = styled.button<{ $w: number }>`
  display: flex;
  align-items: center;
  justify-content: center;
  width: ${(p) => p.$w}px;
  height: 40px;
  font: 14px/20px ${UI};
`;
const Notice = styled.div`
  position: relative;
  display: flex;
  align-items: center;
  width: 48px;
  height: 40px;
  padding-left: 7px;
  background: #000;
  b {
    position: absolute;
    left: 15px;
    top: 18px;
    width: 18px;
    height: 18px;
    border: 1px solid #aaa;
    border-radius: 50%;
    background: #333;
    font: 12px/16px ${UI};
    text-align: center;
  }
`;

const IE = ({ color, ring, body }: { color: string; ring: string; body?: string }) => (
  <Svg size={24} box={24}>
    {body && <circle cx="12" cy="12" r="10.500" fill={body} stroke="#e8f5e8" />}
    <path d="M18.500 15.500Q16 19.500 12 19.500 5.500 19 5.500 12.500 6 6 12.500 6 19 6.500 19 13H8.500" stroke={color} strokeWidth="3.600" />
    <path d="M5 21C-3 21 9 3 18 2q4-.5 2.500 4" stroke={ring} strokeWidth="2" />
  </Svg>
);

const App = () => (
  <>
    <Global />
    <Window>
      <TitleBar>
        <Icon name="app" />
        <Title>广联达BIM钢筋算量软件 GGJ2013 - [C:\Users\Administrator.PC-20141127NRHM\Desktop\白龙村-2018-02-02-19-24-35(2666版).GGJ12]</Title>
        <Ball>57</Ball>
        <WinButtons>
          <WinButton aria-label="最小化"><Svg size={12} box={12}><path d="M1 6.500h10" stroke="#000" /></Svg></WinButton>
          <WinButton aria-label="还原"><Svg size={12} box={12}><path d="M1.500 3.500h7v7h-7zM3.500 3.500v-2h7v7h-2" stroke="#000" /></Svg></WinButton>
          <WinButton aria-label="关闭"><Svg size={12} box={12}><path d="m1 1 10 10M11 1 1 11" stroke="#000" /></Svg></WinButton>
        </WinButtons>
      </TitleBar>

      <MenuBar>
        <Menus>
          {['文件(F)', '编辑(E)', '楼层(L)', '构件(N)', '绘图(D)', '修改(M)', '钢筋量(Q)', '视图(V)', '工具(T)', '云应用(Y)', 'BIM应用(I)', '在线服务(S)', '帮助(H)', '版本'].map((m) => (
            <button key={m}>{m}</button>
          ))}
        </Menus>
        <button>删除未升级构件</button>
        <Account>
          <Icon name="user" />
          <ToolButton>13907298339 <Caret $wide /></ToolButton>
          <Beans>造价豆:0</Beans>
          <Icon name="bell" size={15} />
          <Advice href="#advice"><Icon name="chat" />我要建议</Advice>
        </Account>
        <Ime>
          <Sogou size={28} />
          中
          <Svg size={16}><circle cx="5" cy="5" r="2" stroke="#1f78d1" strokeWidth="1.500" /><path d="M11 8h3v3l-2 3" stroke="#1f78d1" strokeWidth="2" /></Svg>
          {['smile', 'mic', 'keys', 'person', 'shirt', 'wrench'].map((n) => <Icon key={n} name={n} />)}
        </Ime>
      </MenuBar>

      <Bar>
        <Segment $w={150}>
          <button aria-label="新建文件"><Icon name="page" /></button>
          <ToolButton aria-label="打开"><Icon name="open" /><Caret $wide /></ToolButton>
          <button aria-label="保存"><Icon name="save" /></button>
          <Sep />
          <ToolButton aria-label="撤销"><Icon name="undo" /><Caret $wide /></ToolButton>
          <More>»</More>
        </Segment>
        <Segment $w={546}>
          <Tools list={[{ icon: 'paint', label: '绘图' }, { icon: 'sigma', label: '汇总计算' }, { icon: 'cloud', label: '云检查' }]} />
          <Tools off list={[{ icon: 'align', label: '平齐板顶' }, { icon: 'binoc', label: '查找图元' }, { icon: 'glasses', label: '查看钢筋量' }, { icon: 'batch', label: '批量选择' }]} />
          <More>»</More>
        </Segment>
        <Segment>
          <ViewMode><Icon name="rect2d" />二维<Caret $wide /></ViewMode>
          <Tools off wide list={[
            { icon: 'cube', label: '俯视', caret: true }, { icon: 'orbit', label: '动态观察' }, { icon: 'local3d', label: '局部三维', sep: true },
            { icon: 'full', label: '全屏' }, { icon: 'zoom', label: '缩放', caret: true }, { icon: 'pan', label: '平移', caret: true },
          ]} />
          <Tools off list={[{ icon: 'rotate', label: '屏幕旋转', caret: true, sep: true }, { icon: 'floors', label: '选择楼层' }]} />
          <More>»</More>
        </Segment>
      </Bar>

      <Work>
        <NavPanel />
        <Content>
          <Bar $h={29}>
            <Segment $pad={8}>
              <Tools list={[{ icon: 'create', label: '新建', caret: true }, { icon: 'del', label: '删除' }, { icon: 'copy', label: '复制' }, { icon: 'rename', label: '重命名', sep: true }]} />
              <span>楼层</span>
              <FloorPick>基础层<Caret /></FloorPick>
              <Sep />
              <Tools list={[
                { icon: 'sort', label: '排序', caret: true }, { icon: 'filter', label: '过滤', caret: true, sep: true },
                { icon: 'fromFloor', label: '从其他楼层复制构件' }, { icon: 'toFloor', label: '复制构件到其他楼层', sep: true },
                { label: '查找', caret: true, sep: true }, { icon: 'up', label: '上移' }, { icon: 'down', label: '下移' },
              ]} />
            </Segment>
          </Bar>
          <Panels>
            <MemberPanel />
            <PropertyPanel />
          </Panels>
        </Content>
      </Work>

      <Status>
        <StatusCell $w={148} />
        <StatusCell $w={78}><Song>层高:2.15m</Song></StatusCell>
        <StatusCell $w={98}><Song>底标高:-2.2m</Song></StatusCell>
        <StatusCell $w={48}><Song>0</Song></StatusCell>
        <StatusCell><Song>在选择板/筏板底筋遇到此承台时，选择”全部扣减”根据节点设置锚入此承台，选择”不扣减”贯通布置，选择”隔一扣一”则断一根，贯通布置一根。</Song></StatusCell>
        <StatusCell $w={70}><Song>860.8 FPS</Song></StatusCell>
      </Status>

      <Taskbar>
        <Start aria-label="开始"><Svg><path d="m0 2.500 7-1v6H0zM8 1.300 16 0v7.500H8zM0 8.500h7v6l-7-1zM8 8.500h8V16l-8-1.300z" fill="#fff" /></Svg></Start>
        <Cortana>
          <Svg size={22} box={22}><circle cx="11" cy="11" r="9" stroke="#fff" strokeWidth="3" /></Svg>
          <CortanaInput aria-label="搜索" placeholder="在这里输入你要搜索的内容" />
          <Svg><rect x="5.500" y=".500" width="5" height="9" rx="2" stroke="#aaa" /><path d="M3.500 6v5l2 1.500h5l2-1.500V6M8 12.500V16M5 15.500h6" stroke="#aaa" /></Svg>
        </Cortana>
        <Task aria-label="任务视图"><Svg size={20} box={20}><path d="M5.500 3.500h10v13h-10zM3 5.500H.500v9H3M17.500 5.500H20M17.500 14.500H20M19.500 5.500v9" stroke="#fff" strokeWidth="1.200" /></Svg></Task>
        <Task $w={52} aria-label="应用">
          <Svg size={22} box={22}>
            <path d="M11 10.500Q10 5 13 1q7-1 8 4 0 6-10 5.500M11.500 11Q17 10 21 13q1 7-4 8-6 0-5.500-10M11 11.500q1 5.500-2 9.500-7 1-8-4 0-6 10-5.500M10.500 11Q5 12 1 9 0 2 5 1q6 0 5.500 10" fill="#e8e8e8" stroke="#000b10" strokeWidth=".8" />
          </Svg>
        </Task>
        <Task aria-label="浏览器"><IE color="#e6e6e6" ring="#e6e6e6" /></Task>
        <Task $w={56} aria-label="通知应用">
          <Svg size={28} box={28}>
            <path d="M20 14a8 8 0 1 0-3 8q3-3 1-7-3-4-7-2-3 3 0 6 4 1 4-3M4 19q4 7 11 5" stroke="#d5d5d5" strokeWidth="1.600" />
            <path d="M20 1q1.500 0 2 1.500 3 1 3 5V11l2 2H14l2-2V7.500q0-4 3-5z" fill="#f0a91b" />
            <path d="M18 13.500h5l-2.500 2z" fill="#f0a91b" />
          </Svg>
        </Task>
        <Grip $after={11} />
        <Task aria-label="Edge">
          <Svg size={24} box={24}><path d="M2 10Q3 2 12 1.500q10 .5 10 9V14H8.500q1 4 6 4 3.500 0 6-1.500V21q-3 2-7.500 2-9 0-9.500-8 .5-5.500 6-7.500-4 0-7.500 2.500M8.500 10h7.500q-.5-3-3.500-3-3 .5-4 3" fill="#0f7bdc" /></Svg>
        </Task>
        <Task aria-label="IE"><IE color="#43a8ee" ring="#f5c829" /></Task>
        <Task aria-label="文件资源管理器">
          <Svg size={24} box={24}><path d="M1 3h8l2 2h12v16H1z" fill="#ffe08a" /><path d="M1 3h6v3H1z" fill="#e8a33d" /><path d="M5 12h14v9h-4v-4H9v4H5z" fill="#35a8e0" /></Svg>
        </Task>
        <Task $run aria-label="广联达"><Svg size={24} box={24}><path d="M22 3Q17 0 10 1.500 1 4 1 13q1 9 11 10 9-1 10-9 0-3-2-5l-5 1q4 6-1 7.500-6 1-6-5Q9 5.500 15 5q5 .5 7-2" fill="#1ba1f0" /></Svg></Task>
        <Task $run aria-label="360"><IE color="#fff" ring="#d8f5c8" body="#4bb82c" /></Task>
        <Task $run $on aria-label="GGJ"><Icon name="app" size={24} /></Task>
        <Tray>
          <Grip />
          <TrayText $w={42}>链接</TrayText>
          <TrayText $w={67}>26%<br />CPU使用</TrayText>
          <TraySlot $w={32} aria-label="显示隐藏的图标"><Svg size={14} box={14}><path d="m2 9.500 5-5 5 5" stroke="#fff" strokeWidth="1.300" /></Svg></TraySlot>
          <TraySlot $w={20} aria-label="网络"><Svg><path d="M2 14Q3 4 14 2.500M5 14.500q.5-7.500 9-8.500M8 14.500q.5-4.500 6-5.500M11 15q.5-2 3-2.500" stroke="#ddd" strokeWidth="1.300" /></Svg></TraySlot>
          <TraySlot $w={32} aria-label="键盘">
            <Svg size={24} box={24}><path d="M.500 5.500h22v13H.500z" stroke="#fff" strokeWidth="1.300" /><path d="M3 9.500h17M4 12.500h16" stroke="#fff" strokeDasharray="1.500 1.500" /><path d="M6 15.500h11" stroke="#fff" /></Svg>
          </TraySlot>
          <TraySlot $w={26}>中</TraySlot>
          <TraySlot $w={28} aria-label="搜狗输入法"><Sogou size={17} /></TraySlot>
          <TrayText $w={83}>8:15<br />2018/4/5</TrayText>
          <Notice>
            <Svg size={18} box={16}><path d="M0 0h16v12H8l-3 3v-3H0z" fill="#fff" /><path d="M3 3.500h10M3 6h10M3 8.500h6" stroke="#000" /></Svg>
            <b>1</b>
          </Notice>
        </Tray>
      </Taskbar>
    </Window>
  </>
);

export default App;
